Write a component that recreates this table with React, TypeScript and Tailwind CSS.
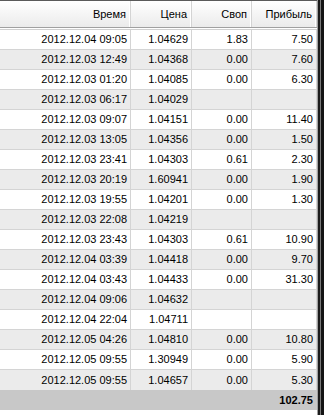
const rows: [string, string, string, string][] = [
  ["2012.12.04 09:05", "1.04629", "1.83", "7.50"],
  ["2012.12.03 12:49", "1.04368", "0.00", "7.60"],
  ["2012.12.03 01:20", "1.04085", "0.00", "6.30"],
  ["2012.12.03 06:17", "1.04029", "", ""],
  ["2012.12.03 09:07", "1.04151", "0.00", "11.40"],
  ["2012.12.03 13:05", "1.04356", "0.00", "1.50"],
  ["2012.12.03 23:41", "1.04303", "0.61", "2.30"],
  ["2012.12.03 20:19", "1.60941", "0.00", "1.90"],
  ["2012.12.03 19:55", "1.04201", "0.00", "1.30"],
  ["2012.12.03 22:08", "1.04219", "", ""],
  ["2012.12.03 23:43", "1.04303", "0.61", "10.90"],
  ["2012.12.04 03:39", "1.04418", "0.00", "9.70"],
  ["2012.12.04 03:43", "1.04433", "0.00", "31.30"],
  ["2012.12.04 09:06", "1.04632", "", ""],
  ["2012.12.04 22:04", "1.04711", "", ""],
  ["2012.12.05 04:26", "1.04810", "0.00", "10.80"],
  ["2012.12.05 09:55", "1.30949", "0.00", "5.90"],
  ["2012.12.05 09:55", "1.04657", "0.00", "5.30"],
];

const cols = "grid grid-cols-[131px_61px_60px_1fr]";

export default function App() {
  return (
    <div className="flex h-[415px] w-[324px] bg-white text-[11px] text-black font-['Liberation_Sans',Arial,sans-serif]">
      <div className="flex w-[318px] flex-col border-r border-[#a0a0a0]">
        <div className="h-px bg-[#5a5a5a]" />
        {/* header */}
        <div className={`${cols} h-[27px] border-b border-[#a0a0a0] bg-gradient-to-b from-white to-[#ebebeb]`}>
          {["Время", "Цена", "Своп", "Прибыль"].map((h) => (
            <div key={h} className="flex items-center justify-end border-r border-[#d4d4d4] pr-[4px] shadow-[inset_-1px_0_0_#ffffff]">
              {h}
            </div>
          ))}
        </div>
        <div className="h-px bg-white" />
        <div className="h-px bg-[#d0d0d0]" />
        {/* rows */}
        {rows.map((r, i) => (
          <div
            key={i}
            className={`${cols} h-[20px] ${i < rows.length - 1 ? "border-b border-[#d4d4d4]" : ""} ${i % 2 ? "bg-[#ebebeb]" : "bg-white"}`}
          >
            {r.map((c, j) => (
              <div key={j} className="flex items-center justify-end border-r border-[#d4d4d4] pr-[3px]">
                {c}
              </div>
            ))}
          </div>
        ))}
        {/* total */}
        <div className="flex h-[20px] items-center justify-end bg-[#c8c8c8] pr-[4px] font-bold">102.75</div>
        <div className="flex-1 bg-white" />
      </div>
      <div className="flex flex-1">
        <div className="w-[2px] bg-[#1c1c1c]" />
        <div className="w-px bg-[#7a7a7a]" />
        <div className="flex-1 bg-[#141414]" />
      </div>
    </div>
  );
}
